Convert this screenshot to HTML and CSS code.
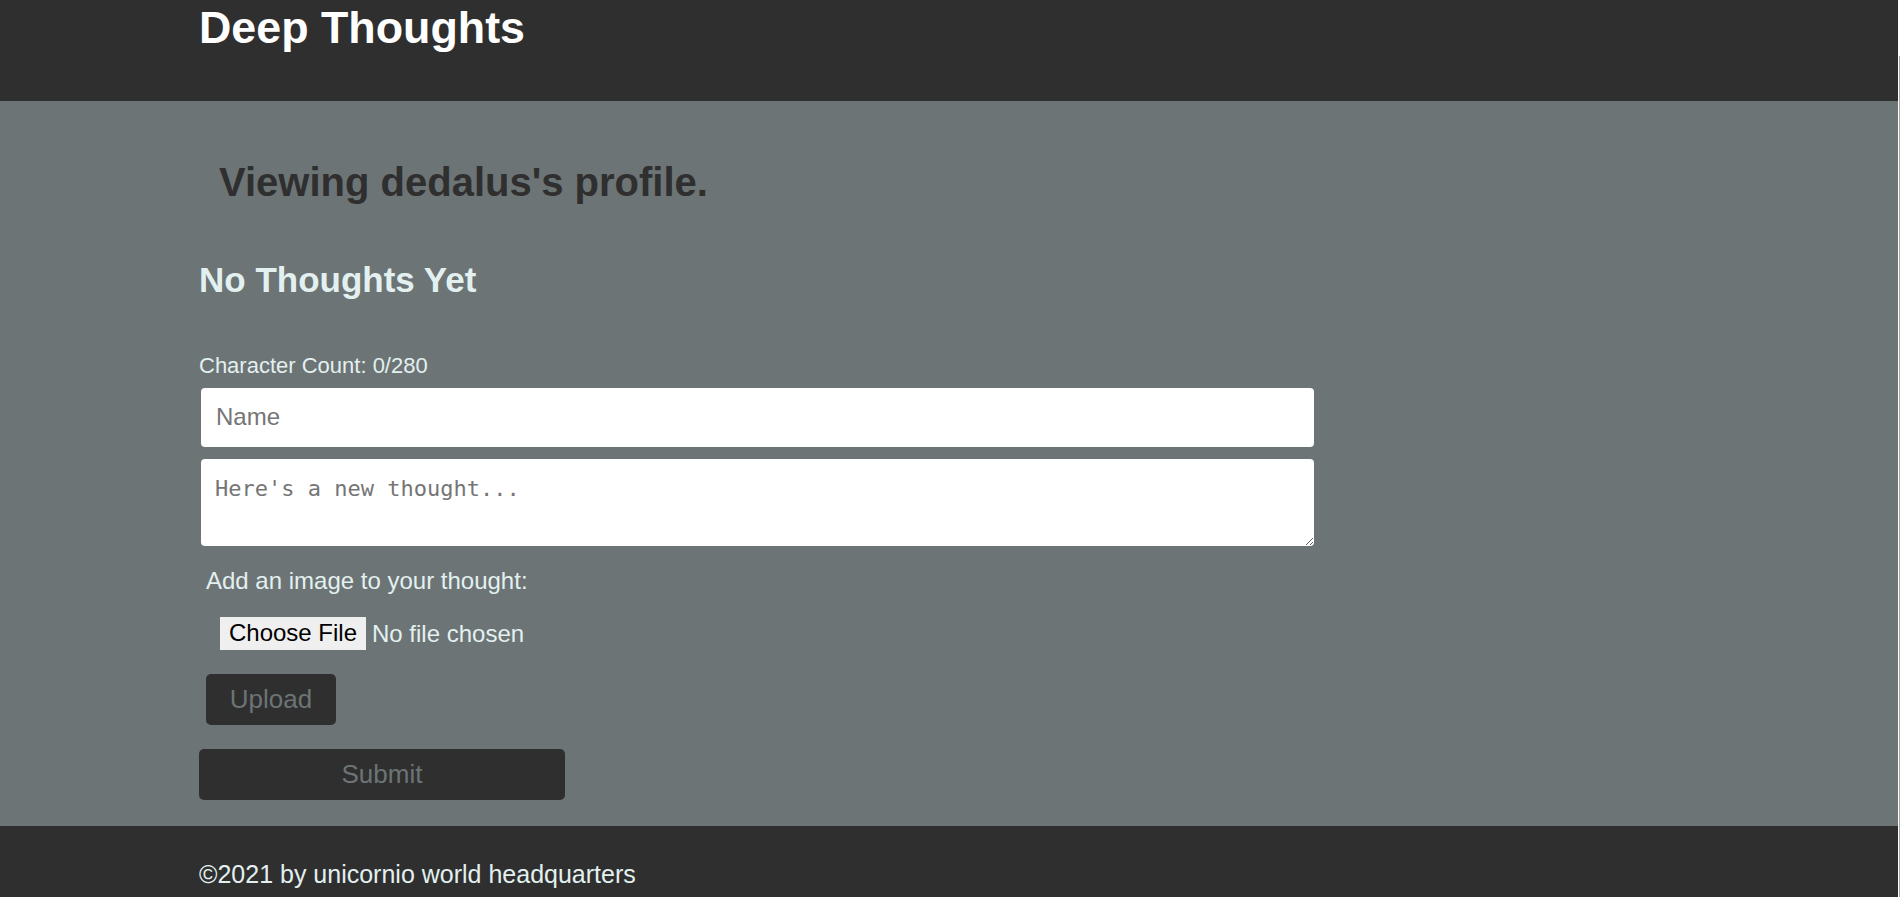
FILE: index.html
```html
<!DOCTYPE html>
<html lang="en">
<head>
<meta charset="utf-8">
<title>Deep Thoughts</title>
<link rel="stylesheet" href="styles.css">
</head>
<body>
<div class="page">
  <header class="site-header">
    <div class="container">
      <h1 class="brand">Deep Thoughts</h1>
    </div>
  </header>
  <main class="content">
    <div class="container">
      <h2 class="profile-title">Viewing dedalus's profile.</h2>
      <section class="thoughts">
        <h3 class="empty">No Thoughts Yet</h3>
      </section>
      <form class="thought-form">
        <p class="count">Character Count: 0/280</p>
        <input class="field name-field" type="text" placeholder="Name">
        <textarea class="field area" placeholder="Here's a new thought..."></textarea>
        <div class="upload-group">
          <label class="upload-label" for="img">Add an image to your thought:</label>
          <input class="file" id="img" type="file">
          <button class="btn upload" type="button">Upload</button>
        </div>
        <button class="btn submit" type="submit">Submit</button>
      </form>
    </div>
  </main>
  <footer class="site-footer">
    <div class="container">©2021 by unicornio world headquarters</div>
  </footer>
</div>
<div class="rail"><div class="thumb"></div></div>
</body>
</html>
```

FILE: styles.css
```css
* { box-sizing: border-box; }

html, body { margin: 0; padding: 0; }

body {
  display: flex;
  min-height: 100vh;
  font-family: "Liberation Sans", Arial, sans-serif;
  background: #6c7475;
  overflow: hidden;
}

.page {
  flex: 1;
  min-width: 0;
  display: flex;
  flex-direction: column;
}

.rail {
  width: 3px;
  background: #ffffff;
  display: flex;
  flex-direction: column;
}

.thumb {
  margin: 56px 0 0 1px;
  width: 1px;
  flex: 1;
  background: #a8a8a8;
}

.container {
  padding-left: 199px;
}

.site-header {
  background: #2f2f2f;
  height: 101px;
  padding-top: 2px;
}

.brand {
  margin: 0;
  font-size: 44.8px;
  font-weight: 700;
  color: #ffffff;
  line-height: normal;
}

.content {
  background: #6c7475;
  padding: 59px 0 26px;
}

.profile-title {
  margin: 0 0 55px 20px;
  font-size: 40px;
  font-weight: 700;
  color: #2f2f2f;
  line-height: normal;
}

.empty {
  margin: 0 0 53px;
  font-size: 35px;
  font-weight: 700;
  color: #e3f0f0;
  line-height: normal;
}

.thought-form {
  display: flex;
  flex-direction: column;
  align-items: flex-start;
}

.count {
  margin: 0 0 8.5px;
  font-size: 22px;
  color: #e3f0f0;
  line-height: normal;
}

.field {
  width: 1113px;
  margin-left: 2px;
  border: none;
  border-radius: 4px;
  background: #ffffff;
  outline: none;
}

.name-field {
  height: 59px;
  padding: 0 15px;
  font-family: "Liberation Sans", Arial, sans-serif;
  font-size: 24px;
  color: #333;
}

.area {
  margin-top: 12px;
  height: 87px;
  padding: 17px 14px 10px;
  font-family: "DejaVu Sans Mono", monospace;
  font-size: 22px;
  color: #333;
  resize: vertical;
  display: block;
}

.field::placeholder { color: #757575; opacity: 1; }

.upload-group {
  display: flex;
  flex-direction: column;
  align-items: flex-start;
  padding-left: 7px;
  margin-top: 21px;
}

.upload-label {
  font-size: 24px;
  color: #e3f0f0;
  line-height: normal;
}

.file {
  margin: 22px 0 0 14px;
  font-family: "Liberation Sans", Arial, sans-serif;
  font-size: 24px;
  color: #e3f0f0;
}

.file::file-selector-button {
  font-family: "Liberation Sans", Arial, sans-serif;
  font-size: 24px;
  color: #000;
  background: #efefef;
  border: none;
  border-radius: 0;
  width: 146px;
  height: 33px;
  padding: 0 8px;
  margin-right: 6px;
}

.btn {
  border: none;
  border-radius: 5px;
  background: #2f2f2f;
  color: #6c7475;
  font-family: "Liberation Sans", Arial, sans-serif;
  font-size: 26px;
  height: 51px;
}

.upload {
  margin-top: 24px;
  width: 130px;
  padding: 0;
}

.submit {
  margin-top: 24px;
  width: 366px;
}

.site-footer {
  flex: 1;
  background: #2f2f2f;
  padding-top: 34px;
  color: #e3f0f0;
  font-size: 25px;
  line-height: normal;
}
```
